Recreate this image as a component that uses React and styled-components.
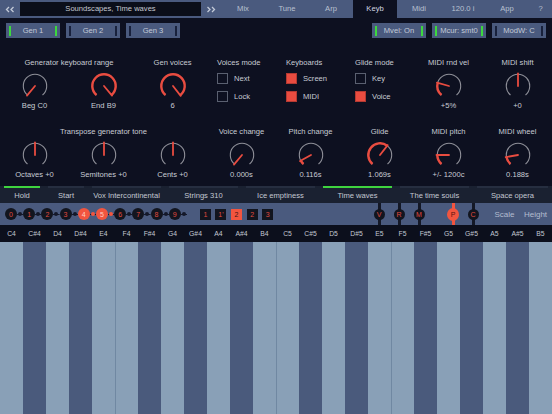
import styled, { createGlobalStyle } from "styled-components";

const GlobalStyle = createGlobalStyle`
  html, body { margin: 0; padding: 0; background: #0d1020; }
  body { font-family: "Liberation Sans", Arial, sans-serif; }
  * { box-sizing: border-box; }
`;

const RED = "#e94c40";
const SLATE = "#4a5a7e";
const DARK = "#0d1020";

const tabs = ["Mix", "Tune", "Arp", "Keyb", "Midi", "120.0 i", "App", "?"];
const presets = [
  { name: "Hold", width: 44, active: true },
  { name: "Start", width: 44 },
  { name: "Vox Intercontinental", width: 77 },
  { name: "Strings 310", width: 77 },
  { name: "Ice emptiness", width: 77 },
  { name: "Time waves", width: 77, active: true },
  { name: "The time souls", width: 77 },
  { name: "Space opera", width: 79 },
];
const notes = ["C", "C#", "D", "D#", "E", "F", "F#", "G", "G#", "A", "A#", "B"];
const keys = [4, 5].flatMap((oct) => notes.map((n) => ({ name: n + oct, sharp: n.includes("#"), edge: n === "C" || n === "F" })));

const polar = (a, r) => [15 + r * Math.sin((a * Math.PI) / 180), 14 - r * Math.cos((a * Math.PI) / 180)];
const arc = (a, b, r) => {
  const [x1, y1] = polar(a, r);
  const [x2, y2] = polar(b, r);
  return `M${x1} ${y1} A${r} ${r} 0 ${b - a > 180 ? 1 : 0} 1 ${x2} ${y2}`;
};

const Knob = ({ angle, from = -140 }) => {
  const lo = Math.min(angle, from);
  const hi = Math.max(angle, from);
  const [px, py] = polar(angle, 12.5);
  return (
    <svg width="30" height="28" viewBox="0 0 30 28">
      <path d={arc(-140, 140, 11.7)} fill="none" stroke="#8e8f98" strokeWidth="1.1" />
      {hi - lo > 1 && <path d={arc(lo, hi, 11.7)} fill="none" stroke={RED} strokeWidth="2.4" />}
      <line x1="15" y1="14" x2={px} y2={py} stroke={RED} strokeWidth="1.8" strokeLinecap="round" />
    </svg>
  );
};

const Chevrons = ({ flip }) => (
  <svg width="10" height="7" viewBox="0 0 10 7" style={flip ? { transform: "scaleX(-1)" } : undefined}>
    <polyline points="4,1 1.5,3.5 4,6" fill="none" stroke="#c3cad8" strokeWidth="1.3" />
    <polyline points="8.5,1 6,3.5 8.5,6" fill="none" stroke="#c3cad8" strokeWidth="1.3" />
  </svg>
);

const App = () => {
  return (
    <Page>
      <GlobalStyle />
      <TopBar>
        <NavArrow><Chevrons /></NavArrow>
        <TitleBox>Soundscapes, Time waves</TitleBox>
        <NavArrow><Chevrons flip /></NavArrow>
        {tabs.map((t) => (
          <Tab key={t} $active={t === "Keyb"} $last={t === "?"}>{t}</Tab>
        ))}
      </TopBar>

      <ButtonRow>
        <ButtonGroup>
          {["Gen 1", "Gen 2", "Gen 3"].map((g, i) => (
            <ToggleButton key={g}>
              <Bar $on={i === 0} />
              {g}
              <Bar $on={i === 0} />
            </ToggleButton>
          ))}
        </ButtonGroup>
        <ButtonGroup>
          {[["Mvel: On", true], ["Mcur: smt0", true], ["ModW: C", false]].map(([g, on]) => (
            <ToggleButton key={g}>
              <Bar $on={on} />
              {g}
              <Bar $on={on} />
            </ToggleButton>
          ))}
        </ButtonGroup>
      </ButtonRow>

      <Controls>
        <ControlRow>
          <Cell $span={2}>
            <Caption>Generator keyboard range</Caption>
            <Pair $span={2}>
              <KnobCell><Knob angle={-140} /><Value>Beg C0</Value></KnobCell>
              <KnobCell><Knob angle={140} /><Value>End B9</Value></KnobCell>
            </Pair>
          </Cell>
          <Cell>
            <Caption>Gen voices</Caption>
            <KnobCell><Knob angle={142} /><Value>6</Value></KnobCell>
          </Cell>
          <Cell $left>
            <Caption>Voices mode</Caption>
            <CheckList>
              <CheckItem><Box />Next</CheckItem>
              <CheckItem><Box />Lock</CheckItem>
            </CheckList>
          </Cell>
          <Cell $left>
            <Caption>Keyboards</Caption>
            <CheckList>
              <CheckItem><Box $on />Screen</CheckItem>
              <CheckItem><Box $on />MIDI</CheckItem>
            </CheckList>
          </Cell>
          <Cell $left>
            <Caption>Glide mode</Caption>
            <CheckList>
              <CheckItem><Box />Key</CheckItem>
              <CheckItem><Box $on />Voice</CheckItem>
            </CheckList>
          </Cell>
          <Cell>
            <Caption>MIDI rnd vel</Caption>
            <KnobCell><Knob angle={-74} /><Value>+5%</Value></KnobCell>
          </Cell>
          <Cell>
            <Caption>MIDI shift</Caption>
            <KnobCell><Knob angle={0} from={0} /><Value>+0</Value></KnobCell>
          </Cell>
        </ControlRow>

        <ControlRow>
          <Cell $span={3}>
            <Caption>Transpose generator tone</Caption>
            <Pair $span={3}>
              <KnobCell><Knob angle={0} from={0} /><Value>Octaves +0</Value></KnobCell>
              <KnobCell><Knob angle={0} from={0} /><Value>Semitones +0</Value></KnobCell>
              <KnobCell><Knob angle={0} from={0} /><Value>Cents +0</Value></KnobCell>
            </Pair>
          </Cell>
          <Cell>
            <Caption>Voice change</Caption>
            <KnobCell><Knob angle={-140} /><Value>0.000s</Value></KnobCell>
          </Cell>
          <Cell>
            <Caption>Pitch change</Caption>
            <KnobCell><Knob angle={-119} /><Value>0.116s</Value></KnobCell>
          </Cell>
          <Cell>
            <Caption>Glide</Caption>
            <KnobCell><Knob angle={38} /><Value>1.069s</Value></KnobCell>
          </Cell>
          <Cell>
            <Caption>MIDI pitch</Caption>
            <KnobCell><Knob angle={-90} /><Value>+/- 1200c</Value></KnobCell>
          </Cell>
          <Cell>
            <Caption>MIDI wheel</Caption>
            <KnobCell><Knob angle={-100} /><Value>0.188s</Value></KnobCell>
          </Cell>
        </ControlRow>
      </Controls>

      <PresetBar>
        {presets.map((p) => (
          <PresetTab key={p.name} style={{ width: p.width }}>
            <Underline $active={p.active} />
            {p.name}
          </PresetTab>
        ))}
      </PresetBar>

      <OctaveRow>
        <Track>
          {Array.from({ length: 10 }, (_, i) => (
            <Step key={i}>
              <Octave $on={i === 4 || i === 5}>{i}</Octave>
              <Link><LinkDot $on={i === 4 || i === 5} /></Link>
            </Step>
          ))}
        </Track>
        <Squares>
          {["1", "1'", "2", "2", "3"].map((s, i) => (
            <Square key={i} $on={i === 2}>{s}</Square>
          ))}
        </Squares>
        <RightGroup>
          {["V", "R", "M", "P", "C"].map((l) => (
            <Pin key={l} $on={l === "P"} $gap={l === "P"}>
              <PinHead $on={l === "P"}>{l}</PinHead>
            </Pin>
          ))}
          <RowLabel $first>Scale</RowLabel>
          <RowLabel>Height</RowLabel>
        </RightGroup>
      </OctaveRow>

      <NoteLabels>
        {keys.map((k) => (
          <NoteLabel key={k.name}>{k.name}</NoteLabel>
        ))}
      </NoteLabels>
      <Keyboard>
        {keys.map((k, i) => (
          <Key key={k.name} $sharp={k.sharp} $edge={k.edge && i > 0} />
        ))}
      </Keyboard>
    </Page>
  );
};

const Page = styled.div`
  width: 552px;
  height: 414px;
  overflow: hidden;
  background: ${DARK};
  color: #c6cad4;
  font-size: 7.6px;
  display: flex;
  flex-direction: column;
`;

const TopBar = styled.div`
  height: 18px;
  display: flex;
  background: ${SLATE};
  color: #b9c1d1;
`;

const NavArrow = styled.div`
  width: 20px;
  display: flex;
  align-items: center;
  justify-content: center;
`;

const TitleBox = styled.div`
  width: 181px;
  margin: 2px 0;
  background: #0b0e19;
  line-height: 14px;
  text-align: center;
  color: #c4c8d0;
`;

const Tab = styled.div`
  width: ${(p) => (p.$last ? "auto" : "44px")};
  flex: ${(p) => (p.$last ? 1 : "none")};
  line-height: 18px;
  text-align: center;
  background: ${(p) => (p.$active ? DARK : "transparent")};
  color: ${(p) => (p.$active ? "#d4d8e0" : "#b9c1d1")};
`;

const ButtonRow = styled.div`
  height: 15px;
  margin-top: 5px;
  padding: 0 6px;
  display: flex;
  justify-content: space-between;
`;

const ButtonGroup = styled.div`
  display: flex;
  gap: 6px;
`;

const ToggleButton = styled.div`
  width: 54px;
  height: 15px;
  padding: 0 3px;
  background: ${SLATE};
  color: #c3cad8;
  display: flex;
  align-items: center;
  justify-content: space-between;
`;

const Bar = styled.div`
  width: 2px;
  height: 10px;
  background: ${(p) => (p.$on ? "#3cd83e" : "#18213c")};
`;

const Controls = styled.div`
  padding-top: 19px;
  display: flex;
  flex-direction: column;
  gap: 14px;
`;

const ControlRow = styled.div`
  height: 55px;
  display: grid;
  grid-template-columns: repeat(8, 69px);
`;

const Cell = styled.div`
  grid-column: span ${(p) => p.$span || 1};
  display: flex;
  flex-direction: column;
  align-items: ${(p) => (p.$left ? "flex-start" : "center")};
  padding-left: ${(p) => (p.$left ? "10px" : "0")};
`;

const Caption = styled.div`
  height: 12px;
  line-height: 12px;
  white-space: nowrap;
  color: #c8ccd4;
`;

const Pair = styled.div`
  display: grid;
  grid-template-columns: repeat(${(p) => p.$span}, 69px);
`;

const KnobCell = styled.div`
  margin-top: 3px;
  display: flex;
  flex-direction: column;
  align-items: center;
  svg {
    display: block;
  }
`;

const Value = styled.div`
  line-height: 12px;
  white-space: nowrap;
  color: #c8ccd4;
`;

const CheckList = styled.div`
  margin-top: 4px;
  display: flex;
  flex-direction: column;
  gap: 7px;
`;

const CheckItem = styled.div`
  display: flex;
  align-items: center;
  gap: 6px;
  height: 11px;
  color: #c8ccd4;
`;

const Box = styled.div`
  width: 11px;
  height: 11px;
  border: 1px solid ${(p) => (p.$on ? "#b43a32" : "#5a6070")};
  background: ${(p) => (p.$on ? RED : "transparent")};
`;

const PresetBar = styled.div`
  margin-top: 5px;
  height: 17px;
  display: flex;
  background: #1a2131;
`;

const PresetTab = styled.div`
  display: flex;
  flex-direction: column;
  align-items: stretch;
  text-align: center;
  line-height: 15px;
  white-space: nowrap;
  color: #c3c8d2;
`;

const Underline = styled.div`
  height: 2px;
  margin: 0 4px;
  background: ${(p) => (p.$active ? "#3fd43f" : "#262e40")};
`;

const OctaveRow = styled.div`
  height: 22px;
  padding-left: 5px;
  display: flex;
  align-items: center;
  background: ${SLATE};
`;

const Track = styled.div`
  display: flex;
  align-items: center;
`;

const Step = styled.div`
  display: flex;
  align-items: center;
`;

const Octave = styled.div`
  width: 12px;
  height: 12px;
  flex: none;
  border-radius: 50%;
  background: ${(p) => (p.$on ? "#f2553f" : "#12151f")};
  color: ${(p) => (p.$on ? "#ffcfc4" : "#e04a3e")};
  font-size: 7px;
  display: flex;
  align-items: center;
  justify-content: center;
`;

const Link = styled.div`
  width: 6.2px;
  height: 11px;
  flex: none;
  display: flex;
  align-items: center;
  justify-content: center;
  background: linear-gradient(#14182a, #14182a) center / 100% 1px no-repeat;
`;

const LinkDot = styled.div`
  width: 4px;
  height: 4px;
  border-radius: 50%;
  background: ${(p) => (p.$on ? "#f2553f" : "#14182a")};
`;

const Squares = styled.div`
  margin-left: 13px;
  display: flex;
  gap: 4.6px;
`;

const Square = styled.div`
  width: 11px;
  height: 11px;
  background: ${(p) => (p.$on ? "#f2553f" : "#12151f")};
  color: ${(p) => (p.$on ? "#3a1212" : "#e04a3e")};
  font-size: 7px;
  display: flex;
  align-items: center;
  justify-content: center;
`;

const RightGroup = styled.div`
  margin-left: auto;
  padding-right: 1px;
  height: 100%;
  display: flex;
  align-items: center;
`;

const Pin = styled.div`
  width: 20px;
  height: 100%;
  margin-left: ${(p) => (p.$gap ? "14px" : "0")};
  display: flex;
  align-items: center;
  justify-content: center;
  background: linear-gradient(
      ${(p) => (p.$on ? "#f2553f" : "#141826")},
      ${(p) => (p.$on ? "#f2553f" : "#141826")}
    )
    center / 3px 100% no-repeat;
`;

const PinHead = styled.div`
  width: ${(p) => (p.$on ? "12px" : "11px")};
  height: ${(p) => (p.$on ? "13px" : "11px")};
  border-radius: 50%;
  background: ${(p) => (p.$on ? "#f2553f" : "#12151f")};
  color: ${(p) => (p.$on ? "#5a1410" : "#e04a3e")};
  font-size: 7px;
  display: flex;
  align-items: center;
  justify-content: center;
`;

const RowLabel = styled.div`
  width: 31px;
  margin-left: ${(p) => (p.$first ? "6px" : "0")};
  text-align: center;
  font-size: 8px;
  color: #b4bdd0;
`;

const NoteLabels = styled.div`
  height: 17px;
  display: grid;
  grid-template-columns: repeat(24, 23px);
  background: #0c0f1c;
`;

const NoteLabel = styled.div`
  line-height: 17px;
  text-align: center;
  font-size: 6.8px;
  color: #c3c8d2;
`;

const Keyboard = styled.div`
  flex: 1;
  display: grid;
  grid-template-columns: repeat(24, 23px);
`;

const Key = styled.div`
  background: ${(p) => (p.$sharp ? "#4a5a7c" : "#89a0b7")};
  border-left: ${(p) => (p.$edge ? "1px solid #7088a2" : "none")};
`;

export default App;
